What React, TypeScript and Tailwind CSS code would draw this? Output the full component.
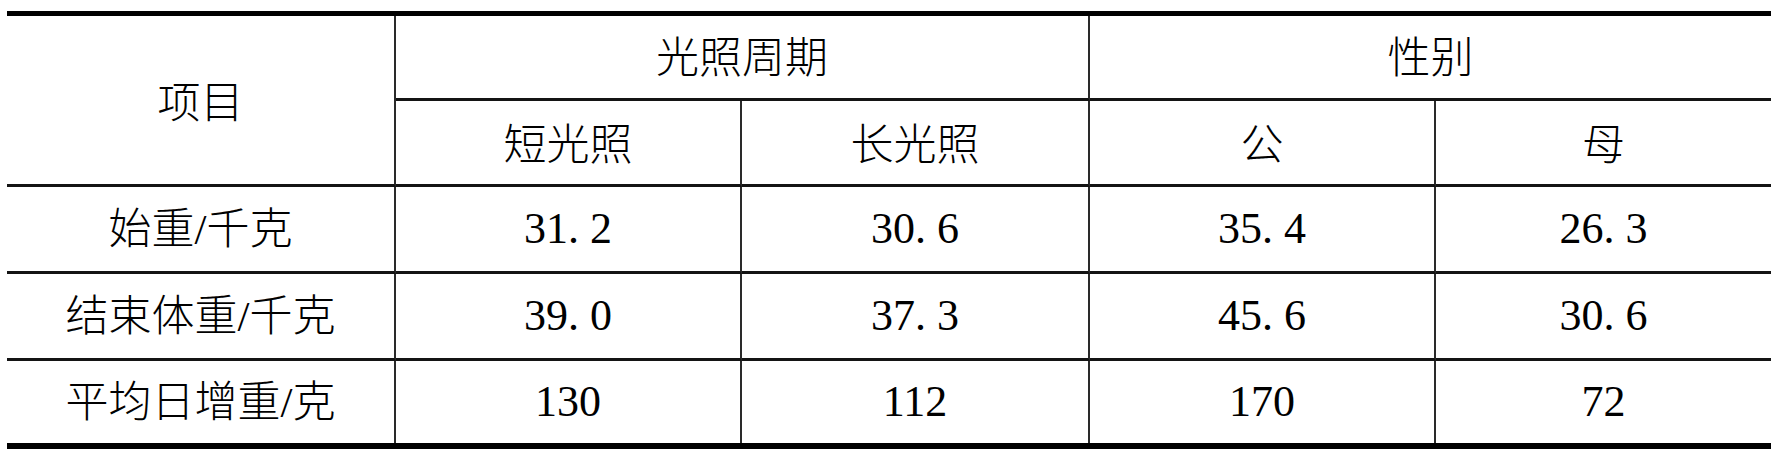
import React from "react";

const cjk =
  "font-[family-name:Liberation_Serif,Noto_Sans_CJK_SC,serif] text-[43px] font-extralight";
const num = "font-[family-name:Liberation_Serif,serif] text-[44px]";

function Cell({
  children,
  className = "",
  font = cjk,
}: {
  children: React.ReactNode;
  className?: string;
  font?: string;
}) {
  return (
    <div
      className={`flex items-center justify-center text-black leading-none ${font} ${className}`}
    >
      {children}
    </div>
  );
}

export default function App() {
  const rows: [string, string, string, string, string][] = [
    ["始重/千克", "31. 2", "30. 6", "35. 4", "26. 3"],
    ["结束体重/千克", "39. 0", "37. 3", "45. 6", "30. 6"],
    ["平均日增重/克", "130", "112", "170", "72"],
  ];
  const hRow = ["h-[87px]", "h-[87px]", "h-[82px]"];
  return (
    <div className="w-[1776px] h-[456px] bg-white pt-[11px] pl-[7px]">
      <div className="w-[1764px] border-t-[5px] border-b-[6px] border-black grid grid-cols-[389px_346px_348px_346px_335px] grid-rows-[85px_86px_87px_87px_82px]">
        <Cell className="row-span-2 border-r-2 border-r-[#2a2a2a] border-b-[3px] border-b-[#141414] pt-[6px]">
          项目
        </Cell>
        <Cell className="col-span-2 border-r-2 border-r-[#2a2a2a] border-b-[3px] border-b-[#141414] pt-[2px]">
          光照周期
        </Cell>
        <Cell className="col-span-2 border-b-[3px] border-b-[#141414] pt-[2px]">性别</Cell>

        <Cell className="border-r-2 border-r-[#2a2a2a] border-b-[3px] border-b-[#141414] pt-[6px]">
          短光照
        </Cell>
        <Cell className="border-r-2 border-r-[#2a2a2a] border-b-[3px] border-b-[#141414] pt-[6px]">
          长光照
        </Cell>
        <Cell className="border-r-2 border-r-[#2a2a2a] border-b-[3px] border-b-[#141414] pt-[6px]">
          公
        </Cell>
        <Cell className="border-b-[3px] border-b-[#141414] pt-[6px]">母</Cell>

        {rows.map((r, i) => {
          const last = i === rows.length - 1;
          const b = last ? "" : "border-b-[3px] border-b-[#141414]";
          return (
            <React.Fragment key={i}>
              <Cell className={`border-r-2 border-r-[#2a2a2a] ${b} ${hRow[i]}`}>{r[0]}</Cell>
              <Cell font={num} className={`border-r-2 border-r-[#2a2a2a] ${b}`}>
                {r[1]}
              </Cell>
              <Cell font={num} className={`border-r-2 border-r-[#2a2a2a] ${b}`}>
                {r[2]}
              </Cell>
              <Cell font={num} className={`border-r-2 border-r-[#2a2a2a] ${b}`}>
                {r[3]}
              </Cell>
              <Cell font={num} className={b}>
                {r[4]}
              </Cell>
            </React.Fragment>
          );
        })}
      </div>
    </div>
  );
}
